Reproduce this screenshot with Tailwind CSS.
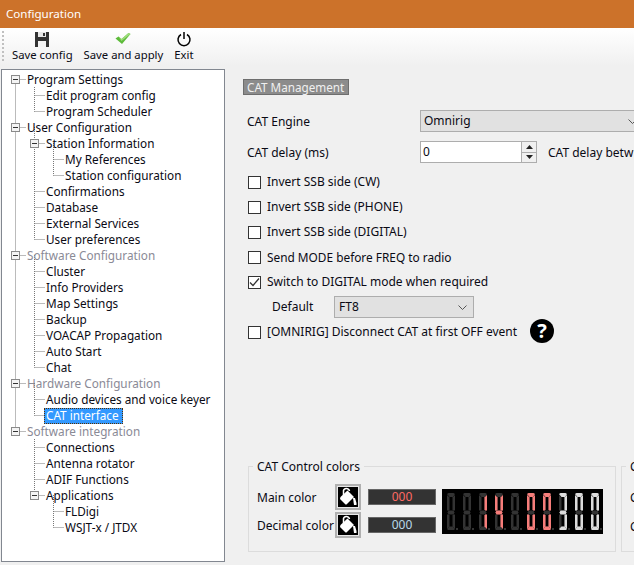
<!DOCTYPE html>
<html><head><meta charset="utf-8"><script src="https://cdn.jsdelivr.net/npm/@tailwindcss/browser@4"></script></head>
<body class="m-0 overflow-hidden">
<div class="w-[634px] h-[565px] overflow-hidden flex flex-col bg-[#f0f0f0] text-[12px] leading-4 text-[#0a0a14] font-['Noto_Sans','DejaVu_Sans',sans-serif]">
  <div class="h-7 shrink-0 bg-[#cc722a] text-white flex items-center pl-[6px] text-[11.6px]">Configuration</div>
  <div class="h-[38px] shrink-0 flex relative bg-gradient-to-b from-white to-[#f0f0f0] pl-3 gap-[11px] text-[11.3px]">
    <span class="absolute left-[2px] top-[3px] h-[30px] border-l-2 border-dotted border-[#c0c0c0]"></span>
    <div class="flex flex-col items-center pt-[3px]">
      <svg width="16" height="16" viewBox="0 0 16 16"><path d="M1 1h14v15H1z" fill="#333"/><path d="M4 1h8v5H4z" fill="#e8e8e8"/><path d="M9 2h2v3H9z" fill="#333"/><path d="M4 10h8v6H4z" fill="#f4f4f4"/></svg>
      <span>Save config</span>
    </div>
    <div class="flex flex-col items-center pt-[3px]">
      <svg width="16" height="16" viewBox="0 0 16 16"><path d="M0.5 7.5l3-2 3 2.5 7-6 2 1-8.500 10z" fill="#5dbb3a"/><path d="M3.500 5.500l3 2.500 7-6 2 1-9 7z" fill="#9ddc7a"/></svg>
      <span>Save and apply</span>
    </div>
    <div class="flex flex-col items-center pt-[3px]">
      <svg width="16" height="16" viewBox="0 0 16 16" fill="none" stroke="#000" stroke-width="1.5"><path d="M8 1v7"/><path d="M5 3.5a6 6 0 1 0 6 0"/></svg>
      <span>Exit</span>
    </div>
  </div>
  <div class="flex flex-1 min-h-0 pt-[3px] pb-[3px] pl-[1px]">
    <div class="relative w-[224px] shrink-0 bg-white border border-[#828790] pt-[1px] text-[11.75px]">
      <svg class="absolute left-0 top-0" width="222" height="490" fill="none" stroke="#777" stroke-dasharray="1 1">
        <path d="M13.5 9.5V361.5M32.5 17V41.5M32.5 57V169.5M32.5 185V297.5M32.5 313V345.5M32.5 369V425.5M51.5 73V105.5M51.5 425V457.5"/>
        <path d="M13.5 9.5H24M13.5 57.5H24M13.5 185.5H24M13.5 313.5H24M13.5 361.5H24"/>
        <path d="M32.5 25.5H43M32.5 41.5H43M32.5 73.5H43M32.5 121.5H43M32.5 137.5H43M32.5 153.5H43M32.5 169.5H43M32.5 201.5H43M32.5 217.5H43M32.5 233.5H43M32.5 249.5H43M32.5 265.5H43M32.5 281.5H43M32.5 297.5H43M32.5 329.5H43M32.5 345.5H43M32.5 377.5H43M32.5 393.5H43M32.5 409.5H43M32.5 425.5H43"/>
        <path d="M51.5 89.5H62M51.5 105.5H62M51.5 441.5H62M51.5 457.5H62"/>
      </svg>
      <div class="flex flex-col">
        <div class="h-4 pl-[25px] relative flex items-center"><span class="absolute left-[9px] top-[4px] w-[9px] h-[9px] border border-[#8a8a8a] bg-[#f4f4f4] flex items-center justify-center"><span class="w-[5px] h-px bg-[#333]"></span></span>Program Settings</div>
        <div class="h-4 pl-[44px] flex items-center">Edit program config</div>
        <div class="h-4 pl-[44px] flex items-center">Program Scheduler</div>
        <div class="h-4 pl-[25px] relative flex items-center"><span class="absolute left-[9px] top-[4px] w-[9px] h-[9px] border border-[#8a8a8a] bg-[#f4f4f4] flex items-center justify-center"><span class="w-[5px] h-px bg-[#333]"></span></span>User Configuration</div>
        <div class="h-4 pl-[44px] relative flex items-center"><span class="absolute left-[28px] top-[4px] w-[9px] h-[9px] border border-[#8a8a8a] bg-[#f4f4f4] flex items-center justify-center"><span class="w-[5px] h-px bg-[#333]"></span></span>Station Information</div>
        <div class="h-4 pl-[63px] flex items-center">My References</div>
        <div class="h-4 pl-[63px] flex items-center">Station configuration</div>
        <div class="h-4 pl-[44px] flex items-center">Confirmations</div>
        <div class="h-4 pl-[44px] flex items-center">Database</div>
        <div class="h-4 pl-[44px] flex items-center">External Services</div>
        <div class="h-4 pl-[44px] flex items-center">User preferences</div>
        <div class="h-4 pl-[25px] relative flex items-center text-[#8a8a96]"><span class="absolute left-[9px] top-[4px] w-[9px] h-[9px] border border-[#8a8a8a] bg-[#f4f4f4] flex items-center justify-center"><span class="w-[5px] h-px bg-[#333]"></span></span>Software Configuration</div>
        <div class="h-4 pl-[44px] flex items-center">Cluster</div>
        <div class="h-4 pl-[44px] flex items-center">Info Providers</div>
        <div class="h-4 pl-[44px] flex items-center">Map Settings</div>
        <div class="h-4 pl-[44px] flex items-center">Backup</div>
        <div class="h-4 pl-[44px] flex items-center">VOACAP Propagation</div>
        <div class="h-4 pl-[44px] flex items-center">Auto Start</div>
        <div class="h-4 pl-[44px] flex items-center">Chat</div>
        <div class="h-4 pl-[25px] relative flex items-center text-[#8a8a96]"><span class="absolute left-[9px] top-[4px] w-[9px] h-[9px] border border-[#8a8a8a] bg-[#f4f4f4] flex items-center justify-center"><span class="w-[5px] h-px bg-[#333]"></span></span>Hardware Configuration</div>
        <div class="h-4 pl-[44px] flex items-center">Audio devices and voice keyer</div>
        <div class="h-4 pl-[42px] flex items-center"><span class="relative top-[1px] h-4 leading-[14px] w-[79px] pl-[2px] bg-[#3399ff] text-white outline outline-1 -outline-offset-1 outline-dotted outline-[#5a3000]">CAT interface</span></div>
        <div class="h-4 pl-[25px] relative flex items-center text-[#8a8a96]"><span class="absolute left-[9px] top-[4px] w-[9px] h-[9px] border border-[#8a8a8a] bg-[#f4f4f4] flex items-center justify-center"><span class="w-[5px] h-px bg-[#333]"></span></span>Software integration</div>
        <div class="h-4 pl-[44px] flex items-center">Connections</div>
        <div class="h-4 pl-[44px] flex items-center">Antenna rotator</div>
        <div class="h-4 pl-[44px] flex items-center">ADIF Functions</div>
        <div class="h-4 pl-[44px] relative flex items-center"><span class="absolute left-[28px] top-[4px] w-[9px] h-[9px] border border-[#8a8a8a] bg-[#f4f4f4] flex items-center justify-center"><span class="w-[5px] h-px bg-[#333]"></span></span>Applications</div>
        <div class="h-4 pl-[63px] flex items-center">FLDigi</div>
        <div class="h-4 pl-[63px] flex items-center">WSJT-x / JTDX</div>
      </div>
    </div>
    <div class="flex-1 min-w-0 pl-[18px] pt-[10px] flex flex-col overflow-hidden">
      <div class="self-start h-4 w-[106px] bg-[#8c8c8c] border border-[#6e6e6e] text-[#f0f0f0] text-[11.7px] flex items-center pl-[3px]">CAT Management</div>
      <div class="mt-[15px] flex items-center h-[22px] pl-[4px]"><span class="w-[173px] shrink-0 relative top-[1px]">CAT Engine</span><div class="w-[222px] shrink-0 h-[22px] bg-[#e1e1e1] border border-[#adadad] flex items-center pl-[3px] justify-between pr-1">Omnirig<svg width="9" height="5" viewBox="0 0 9 5" fill="none" stroke="#555"><path d="M0.5 0.5l4 4 4-4"/></svg></div></div>
      <div class="mt-[9px] flex items-center h-[22px] pl-[4px]"><span class="w-[173px] shrink-0 relative top-[1px]">CAT delay (ms)</span><div class="w-[117px] shrink-0 h-[22px] bg-white border border-[#adadad] flex items-center pl-[2px] relative">0<div class="absolute right-0 top-0 bottom-0 w-[15px] border-l border-[#adadad] flex flex-col bg-[#f0f0f0]"><div class="flex-1 border-b border-[#adadad] flex items-center justify-center"><svg width="7" height="4"><path d="M3.5 0L7 4H0z" fill="#222"/></svg></div><div class="flex-1 flex items-center justify-center"><svg width="7" height="4"><path d="M0 0h7L3.5 4z" fill="#222"/></svg></div></div></div><span class="ml-[11px] whitespace-nowrap relative top-[1px]">CAT delay betw</span></div>
      <div class="mt-[11px] flex flex-col gap-[9px] pl-[5px]">
        <div class="flex items-center h-4 gap-[6px]"><span class="w-[13px] h-[13px] bg-white border border-[#333]"></span>Invert SSB side (CW)</div>
        <div class="flex items-center h-4 gap-[6px]"><span class="w-[13px] h-[13px] bg-white border border-[#333]"></span>Invert SSB side (PHONE)</div>
        <div class="flex items-center h-4 gap-[6px]"><span class="w-[13px] h-[13px] bg-white border border-[#333]"></span>Invert SSB side (DIGITAL)</div>
        <div class="flex items-center h-4 gap-[6px]"><span class="w-[13px] h-[13px] bg-white border border-[#333]"></span><span class="text-[11.85px]">Send MODE before FREQ to radio</span></div>
        <div class="flex items-center h-4 gap-[6px]"><span class="w-[13px] h-[13px] bg-white border border-[#333] flex items-center justify-center"><svg width="11" height="11" viewBox="0 0 11 11" fill="none" stroke="#333" stroke-width="1.3"><path d="M1 5.5l3 3 6-7"/></svg></span>Switch to DIGITAL mode when required</div>
      </div>
      <div class="mt-[6px] flex items-center h-[22px] pl-[29px]"><span class="w-[62px] shrink-0">Default</span><div class="w-[140px] h-[22px] bg-[#e1e1e1] border border-[#adadad] flex items-center justify-between pl-[4px] pr-[6px]">FT8<svg width="9" height="5" viewBox="0 0 9 5" fill="none" stroke="#555"><path d="M0.5 0.5l4 4 4-4"/></svg></div></div>
      <div class="mt-[3px] flex items-center h-[22px] pl-[5px]"><span class="w-[13px] h-[13px] bg-white border border-[#333] shrink-0"></span><span class="ml-[6px] w-[263px] shrink-0 whitespace-nowrap">[OMNIRIG] Disconnect CAT at first OFF event</span><span class="w-6 h-6 shrink-0 relative -top-[1px] rounded-full bg-black text-white font-bold text-[20px] flex items-center justify-center">?</span></div>
      <div class="mt-auto mb-[10px] flex gap-[5px] pl-[5px]">
        <div class="relative w-[368px] h-[86px] shrink-0 border border-[#dcdcdc]">
          <span class="absolute left-[4px] -top-[8px] bg-[#f0f0f0] px-[4px]">CAT Control colors</span>
          <div class="flex h-full pl-[8px] pt-[17px]">
            <div class="flex flex-col gap-[2px] w-[78px] pt-[1px]">
              <div class="h-[26px] flex items-center">Main color</div>
              <div class="h-[26px] flex items-center">Decimal color</div>
            </div>
            <div class="flex flex-col gap-[2px]">
              <span class="w-[26px] h-[26px] border-2 border-[#b0b0b0] bg-[#e8e8e8] p-[1px] flex items-center justify-center"><svg class="bg-black" width="20" height="20" viewBox="0 0 20 20"><path d="M2.500 10l7-6.500 6.500 6.500-7 7q-1 1-2 0l-4.500-4.500q-1-1 0-2.500z" fill="#fff"/><path d="M5.500 8V5a3 3 0 0 1 6-1" stroke="#fff" fill="none" stroke-width="1.500"/><path d="M15 11h2l1.500 5v2h-2.500z" fill="#fff"/></svg></span>
              <span class="w-[26px] h-[26px] border-2 border-[#b0b0b0] bg-[#e8e8e8] p-[1px] flex items-center justify-center"><svg class="bg-black" width="20" height="20" viewBox="0 0 20 20"><path d="M2.500 10l7-6.500 6.500 6.500-7 7q-1 1-2 0l-4.500-4.500q-1-1 0-2.500z" fill="#fff"/><path d="M5.500 8V5a3 3 0 0 1 6-1" stroke="#fff" fill="none" stroke-width="1.500"/><path d="M15 11h2l1.500 5v2h-2.500z" fill="#fff"/></svg></span>
            </div>
            <div class="flex flex-col gap-[12px] ml-[7px] pt-[5px]">
              <span class="w-[68px] h-[16px] bg-[#333] border border-[#666] text-[#ff6a64] flex items-center justify-center">000</span>
              <span class="w-[68px] h-[16px] bg-[#333] border border-[#666] text-[#b8d8e8] flex items-center justify-center">000</span>
            </div>
            <svg class="ml-[6px] mt-[5px] bg-black" width="161" height="45" viewBox="0 0 161 45">
              <defs>
                <path id="a" d="M1.500 0h5l1.500 1-2 3H2.500L0 1z"/>
                <path id="f" d="M0 2l2.500 2.500v12l-1.500 1.500-1-1z"/>
                <path id="b" d="M8 2l-2.500 2.500v12l1.500 1.500 1-1z"/>
                <path id="g" d="M1.500 17.500h5l1 2-1 2h-5l-1-2z"/>
                <path id="e" d="M0 22l1-1 1.500 1.500v11l-2.500 2.500z"/>
                <path id="c" d="M8 22l-1-1-1.500 1.500v11l2.500 2.500z"/>
                <path id="d" d="M2.500 33.500h3l2.500 2.500-1 1h-6l-1-1z"/>
                <g id="n"><use href="#a"/><use href="#b"/><use href="#c"/><use href="#d"/><use href="#e"/><use href="#f"/><use href="#g"/><rect x="9" y="35" width="2" height="2"/></g>
              </defs>
              <g fill="#333">
                <use href="#n" x="5" y="4"/><use href="#n" x="21" y="4"/><use href="#n" x="37" y="4"/><use href="#n" x="53" y="4"/><use href="#n" x="69" y="4"/><use href="#n" x="85" y="4"/><use href="#n" x="101" y="4"/><use href="#n" x="117" y="4"/><use href="#n" x="133" y="4"/><use href="#n" x="149" y="4"/>
              </g>
              <g fill="#f77d7a" transform="translate(37 4)"><use href="#b"/><use href="#c"/></g>
              <g fill="#f77d7a" transform="translate(53 4)"><use href="#f"/><use href="#b"/><use href="#g"/><use href="#c"/></g>
              <g fill="#f77d7a" transform="translate(85 4)"><use href="#a"/><use href="#b"/><use href="#c"/><use href="#d"/><use href="#e"/><use href="#f"/></g>
              <g fill="#f77d7a" transform="translate(101 4)"><use href="#a"/><use href="#b"/><use href="#c"/><use href="#d"/><use href="#e"/><use href="#f"/></g>
              <g fill="#dcdcdc" transform="translate(117 4)"><use href="#a"/><use href="#b"/><use href="#c"/><use href="#d"/><use href="#g"/></g>
              <g fill="#dcdcdc" transform="translate(133 4)"><use href="#a"/><use href="#b"/><use href="#c"/><use href="#d"/><use href="#e"/><use href="#f"/></g>
              <g fill="#dcdcdc" transform="translate(149 4)"><use href="#a"/><use href="#b"/><use href="#c"/><use href="#d"/><use href="#e"/><use href="#f"/></g>
            </svg>
          </div>
        </div>
        <div class="relative w-[100px] h-[86px] shrink-0 border border-[#dcdcdc] pl-[8px]">
          <span class="absolute left-[4px] -top-[8px] bg-[#f0f0f0] px-[4px]">C</span>
          <div class="mt-[23px]">C</div><div class="mt-[13px]">C</div>
        </div>
      </div>
    </div>
  </div>
</div>
</body></html>
